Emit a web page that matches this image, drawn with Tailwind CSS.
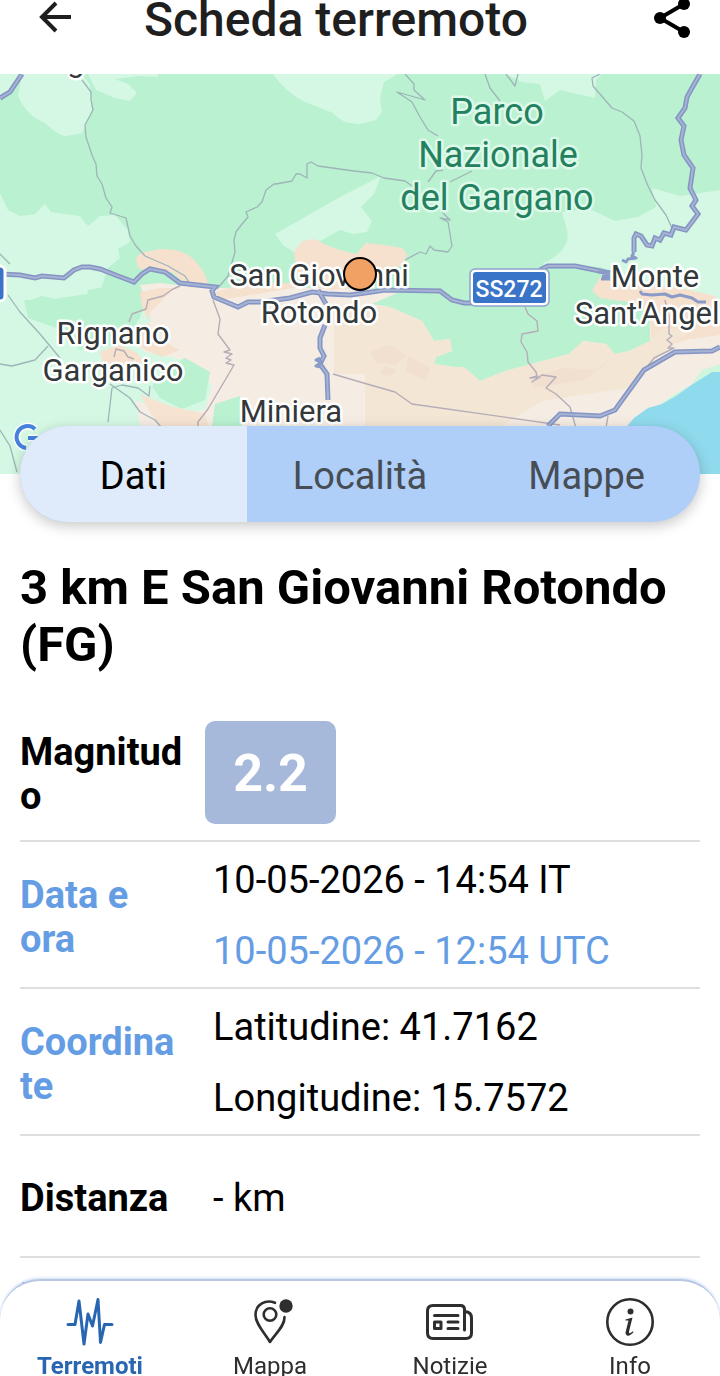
<!DOCTYPE html>
<html lang="it">
<head>
<meta charset="utf-8">
<meta name="viewport" content="width=device-width, initial-scale=1">
<title>Scheda terremoto</title>
<script src="https://cdn.jsdelivr.net/npm/@tailwindcss/browser@4"></script>
</head>
<body class="flex h-screen flex-col overflow-hidden bg-white font-['Roboto',sans-serif] text-black">

<header class="flex h-[74px] shrink-0 items-start bg-white pr-7 pl-8">
  <button type="button" aria-label="Indietro" class="w-[112px]">
    <svg class="size-10" viewBox="0 0 40 40" fill="none" stroke="#1f1f1f" stroke-width="4"><path d="M39 17H10M24 3 10 17l14 14"/></svg>
  </button>
  <h1 class="flex-1 text-[48px] leading-10 font-medium text-[#1f1f1f]">Scheda terremoto</h1>
  <button type="button" aria-label="Condividi">
    <svg class="size-11" viewBox="648 0 44 44"><path d="M684 4 660 18 684 32" fill="none" stroke="#000" stroke-width="4"/><circle cx="684" cy="4" r="6"/><circle cx="660" cy="18" r="6"/><circle cx="684" cy="32" r="6"/></svg>
  </button>
</header>

<main class="mb-[60px] min-h-0 flex-1 overflow-hidden">
  <svg class="block h-100 w-full" viewBox="0 74 720 400" preserveAspectRatio="xMidYMid slice" role="img" aria-label="Mappa dell'epicentro">
    <rect y="74" width="720" height="400" fill="#b9f1d1"/>
    <!-- open land -->
    <g fill="#d4f8e3">
      <path d="M0 74H22L12 92 0 96ZM22 74L18 95Q25 115 45 123 60 137 67 136L82 133 92 110 90 85 82 74ZM88 74L96 90 115 98 130 101 137 93 128 84 115 79 140 76 158 77V74Z"/>
      <path d="M273 74Q285 92 305 102L333 113Q343 125 360 124L376 120 382 112 380 98 384 82 398 74ZM505 74L522 82 540 84 545 101 560 90 595 98 596 80 602 74Z"/>
      <path d="M0 193L8 210 20 216 35 214 45 204 51 212 80 216 88 226 100 216 115 215 128 230 130 242 118 249 120 258 108 268 100 292 60 298 50 300 24 300 28 318 62 330 80 350 115 345 140 318 145 300 200 340 220 370 232 400V474H0Z"/>
      <path d="M275 234L298 221 340 197 381 176 374 194 361 207 372 221 367 232 353 234 340 230 317 243 294 252 284 246Z"/>
      <path d="M562 212L590 209 615 221 638 217 656 207 652 188 680 196 720 190V330L690 330 660 292 601 267 542 264Q572 250 567 230Z"/>
    </g>
    <g fill="#b9f1d1"><path d="M25 302L42 296 68 302 64 326 42 322ZM88 290L110 286 134 304 138 330 98 328 84 310Z"/></g>
    <!-- hills and plain -->
    <path fill="#f5ede4" d="M140 285L160 283 205 288 260 288 330 288 404 290 372 304 390 307 422 321 434 341 450 339 452 351 436 357 434 364 455 367 464 367 480 381 505 371 569 354 583 341 606 344 615 354 629 351 650 341V314L665 304 720 300V474H150L135 400 170 414 205 410 212 385 185 360 145 352 130 340 152 320Z"/>
    <g fill="#f6e0ce">
      <path d="M136 258L141 253 160 249Q178 248 190 256 206 270 208 284L190 288 172 272 155 272 138 268ZM140 292L160 288 175 288 150 312 148 325 160 340 180 350 162 357 145 350 130 338 150 325 142 306ZM100 352L118 345 136 352 145 362 122 368 104 366Z"/>
      <path d="M294 252L302 241 315 239 326 245 340 250 356 254 366 243 385 245 402 248 407 254 404 265 378 272 372 286 330 290 300 284 296 266ZM210 294L240 284 290 283 300 287 252 295 225 299Z"/>
      <path d="M592 291L600 277 622 280 690 290 715 296 720 302V335L685 340 652 352 650 314 634 303 600 298Z"/>
    </g>
    <path fill="#f4e6d5" d="M334 320L365 306 390 307 422 321 434 341 450 339 452 351 436 357 434 364 455 367 464 367 480 381 505 371 569 354 583 341 606 344 615 354 629 351 650 341 660 328 690 330 646 368 634 387 542 401 505 424 500 440H365V374H334Z"/>
    <path fill="#b9f1d1" d="M152 386L162 372 185 358 210 372 205 400 182 409 160 398ZM215 404L240 396 242 426H212Z"/>
    <path fill="#f6e3d2" d="M140 394L170 406 205 414 210 430H160Z"/>
    <g fill="#efdccb" opacity=".6"><path d="M370 352l20-7 16 10-10 10-20-2zM408 356l22 12-4 12-20-8zM530 378l34-10 30 2 20-12-30 22-50 8zM385 366l12 4-6 6-12-2z"/></g>
    <path fill="#cdf6dd" d="M720 364L702 370 692 384 672 396 658 406 664 408 684 398 704 380 720 374Z"/>
    <path fill="#90daed" d="M720 372L712 372 690 386 676 396 662 404 648 408 634 418 622 432 640 474H720Z"/>
    <!-- minor roads -->
    <g fill="none" stroke="#9fb4b9" stroke-width="1.3" stroke-linejoin="round">
      <path d="M82 80L91 92 91 100 93 110 85 125 86 137 92 155 96 164 97 176 102 184 106 198 112 207 110 213 126 218 130 236 136 246 145 256 168 266 185 276 190 284"/>
      <path d="M217 289L228 276 235 252 234 240 236 232 242 224 248 217 246 212 257 207 262 202 266 190 274 184 276 184 292 181 296 174 300 174 307 178V164L311 162 318 166 354 171 372 173 384 178 405 181 415 188"/>
      <path d="M405 74L414 84 414 90 425 100 397 92 412 102 420 117 428 130 438 136M485 74L490 88 500 101M506 74L515 86 518 74"/>
      <path d="M442 212L450 220 440 218 448 222 452 246 448 252 434 250 430 246 426 254 420 252 405 260M428 182L436 171 443 170M450 182L472 171"/>
      <path d="M600 74L592 78 593 86 612 108 622 112 634 121 640 136 642 155 641 168 648 186 655 200 666 215 672 228"/>
      <path d="M0 254L10 264M0 430L10 446 17 472M8 295L20 312 40 334 60 358M108 422L112 388 122 385 138 388 149 396 150 386M110 384L130 398 140 412 155 420 162 428M0 364L12 366 35 360 48 346"/>
    </g>
    <g fill="none" stroke="#b5adb7" stroke-width="1.4" stroke-linejoin="round">
      <path d="M129 322L132 314 146 309 148 300 163 296 173 289 180 286M213 300L220 319 218 334 230 350 224 352 232 354 226 358 231 360 226 363 234 365 208 409 198 422 198 428M114 357l2-8 8 2 4 6 6 2"/>
      <path d="M333 374L360 382 395 392 412 404 560 425M525 307L528 314 537 321 538 331 522 334 521 342 527 352 528 362 536 372 537 376 530 378 540 377 532 382 542 375 556 377 546 388 556 394 570 407 576 428M606 428L608 416"/>
      <path d="M665 300L669 316 669 334 672 336 667 340 672 344 668 348 674 348 654 358 645 370"/>
    </g>
    <!-- main roads: casing, then a lighter core -->
    <g fill="none" stroke-linejoin="round">
      <g id="roads">
        <path d="M0 274L20 275 35 278 42 276 64 278 74 270 82 267 90 267 100 269 118 276 134 282 142 274 150 269 165 272 180 283 215 287 212 291 214 297 238 307 248 302 260 302 290 298 312 292 328 294 350 295 365 293 385 290 440 291 452 300 464 303 472 303M540 270L548 266 575 266 610 273"/>
        <path d="M0 98L10 92 22 74M318 290L326 304M325 325L320 338 320 348 324 356 320 364 327 374 328 400"/>
        <path d="M548 426L560 414 600 416 615 410 644 370 675 352 712 351 720 347"/>
        <path d="M700 74L692 88 687 97 685 108 678 118 684 126 681 140 684 155 693 168 690 188 696 200 692 206 698 214 686 230 674 227 671 235 664 233 660 240 655 238 652 246 647 245 641 236 636 234 634 238 634 252"/>
      </g>
    </g>
    <use href="#roads" fill="none" stroke="#8494c4" stroke-width="5"/>
    <use href="#roads" fill="none" stroke="#a6b3d3" stroke-width="2"/>
    <path d="M634 252L632 256 636 258 628 259 626 262 622 260M640 291L642 294 652 295 665 294 672 297 680 295 692 298 698 302 706 302M598 272h12M602 276h8M601 279h9M320 358l-4 2 6 2-6 4 5 1" fill="none" stroke="#8a9bc7" stroke-width="3" stroke-linejoin="round"/>
    <!-- place names -->
    <g font-family="Roboto, sans-serif" text-anchor="middle" font-size="31" fill="#33383a" stroke="#fff" stroke-width="5" stroke-linejoin="round" paint-order="stroke">
      <g font-size="36" fill="#23815f" stroke="#dcf9e9">
        <text x="497" y="124">Parco</text><text x="498" y="167">Nazionale</text><text x="497" y="210">del Gargano</text>
      </g>
      <text x="76" y="72">g</text>
      <text x="319" y="286">San Giovanni</text><text x="319" y="323">Rotondo</text>
      <text x="113" y="344">Rignano</text><text x="113" y="381">Garganico</text>
      <text x="291" y="422">Miniera</text>
      <text x="655" y="287">Monte</text><text x="656" y="324">Sant'Angelo</text>
    </g>
    <rect x="470" y="269" width="79" height="37" rx="5" fill="#fff" stroke="#8ea2cf" stroke-width="1.5"/>
    <rect x="473" y="272" width="73" height="31" rx="3" fill="#3a74c8"/>
    <text x="509" y="297" font-family="Roboto, sans-serif" font-size="23" font-weight="500" fill="#fff" text-anchor="middle">SS272</text>
    <rect x="-20" y="266" width="25" height="35" rx="5" fill="#3a74c8" stroke="#fff" stroke-width="3"/>
    <g fill="none"><path d="M35 429A11 11 0 1 0 26 448M28 438H38" stroke="#fff" stroke-width="7"/><path d="M35 429A11 11 0 1 0 26 448M28 438H38" stroke="#4681dd" stroke-width="4"/></g>
    <circle cx="360" cy="274" r="16" fill="#f1a163" stroke="#000" stroke-width="2"/>
  </svg>

  <div class="px-5">
    <nav aria-label="Sezioni" class="relative -mt-12 grid h-24 grid-cols-3 overflow-hidden rounded-full bg-[#afcef8] text-[38px] text-[#474d55] shadow-[0_4px_14px_rgba(0,0,0,0.22)]">
      <button type="button" class="bg-[#dfeafb] pt-1 text-black" aria-current="true">Dati</button>
      <button type="button" class="pt-1">Località</button>
      <button type="button" class="pt-1">Mappe</button>
    </nav>

    <h2 class="mt-[37px] text-[49px] leading-[57px] font-bold">3 km E San Giovanni Rotondo (FG)</h2>

    <table class="mt-[31px] w-full table-fixed border-collapse text-left text-[38px]">
      <colgroup><col class="w-[185px]"><col></colgroup>
      <tbody>
        <tr class="h-[137px] border-b-2 border-[#dedede]">
          <th scope="row" class="pt-1 pr-5 leading-[44px] font-bold wrap-break-word">Magnitudo</th>
          <td><span class="inline-flex h-[103px] w-[131px] items-center justify-center rounded-[10px] bg-[#a6b9da] pt-1 align-middle text-[52px] font-bold text-white">2.2</span></td>
        </tr>
        <tr class="h-[146px] border-b-2 border-[#dedede]">
          <th scope="row" class="pt-1 pr-5 leading-[44px] font-bold wrap-break-word text-[#659de4]">Data e ora</th>
          <td class="pt-[3px] pl-2 leading-[71px]"><p>10-05-2026 - 14:54 IT</p><p class="text-[#659de4]">10-05-2026 - 12:54 UTC</p></td>
        </tr>
        <tr class="h-[146px] border-b-2 border-[#dedede]">
          <th scope="row" class="pt-1 pr-5 leading-[44px] font-bold wrap-break-word text-[#659de4]">Coordinate</th>
          <td class="pt-[3px] pl-2 leading-[71px]"><p>Latitudine: 41.7162</p><p>Longitudine: 15.7572</p></td>
        </tr>
        <tr class="h-[122px] border-b-2 border-[#dedede]">
          <th scope="row" class="pt-1 pr-5 leading-[44px] font-bold wrap-break-word">Distanza</th>
          <td class="pt-1 pl-2">- km</td>
        </tr>
        <tr class="h-[122px]">
          <th scope="row" class="pr-5 leading-[44px] font-bold wrap-break-word text-[#659de4]">Profondità</th>
          <td></td>
        </tr>
      </tbody>
    </table>
  </div>
</main>

<nav aria-label="Principale" class="fixed inset-x-0 bottom-0 grid h-[97px] grid-cols-4 rounded-t-[40px] border-t-2 border-[#b9c7e0] bg-white text-2xl leading-6 text-[#2e2e2e] shadow-[0_-1px_3px_rgba(150,185,235,0.5)]">
  <a href="#terremoti" class="flex flex-col items-center gap-2 pt-[17px] font-bold text-[#2866b2]" aria-current="page">
    <svg class="size-12 shrink-0" viewBox="66 1298 48 48" fill="none" stroke="currentColor" stroke-width="3" stroke-linecap="round" stroke-linejoin="round"><path d="M68 1324.500H75L79 1301 84 1344 88 1314 92.500 1326 98 1299.500 100.500 1342.500 104.500 1324.500H112"/></svg>
    Terremoti
  </a>
  <a href="#mappa" class="flex flex-col items-center gap-2 pt-[17px]">
    <svg class="size-12 shrink-0" viewBox="246 1298 48 48" fill="none" stroke="currentColor" stroke-width="2.600" stroke-linecap="round" stroke-linejoin="round"><path d="M275 1302.800C266 1299 255.500 1304 255.500 1315 255.500 1324 264 1332 270 1342 275 1334 285 1326 284.500 1317"/><circle cx="270" cy="1314.500" r="6.300"/><circle cx="286" cy="1306" r="6.700" fill="currentColor" stroke="none"/></svg>
    Mappa
  </a>
  <a href="#notizie" class="flex flex-col items-center gap-2 pt-[17px]">
    <svg class="size-12 shrink-0" viewBox="426 1298 48 48" fill="none" stroke="currentColor" stroke-width="3" stroke-linecap="round" stroke-linejoin="round"><path d="M464.500 1330V1309.500Q464.500 1305.500 460.500 1305.500H433Q427.500 1305.500 427.500 1311V1333Q427.500 1338.500 433 1338.500H466Q471.500 1338.500 471.500 1333V1318Q471.500 1312 465 1311.500M434.500 1315.500H458M448 1322H458M448 1328.500H458"/><path d="M434.500 1322H441V1328.500H434.500Z"/></svg>
    Notizie
  </a>
  <a href="#info" class="flex flex-col items-center gap-2 pt-[17px]">
    <svg class="size-12 shrink-0" viewBox="606 1298 48 48" fill="none" stroke="currentColor" stroke-width="2.600"><circle cx="630" cy="1322" r="22.700"/><circle cx="630.500" cy="1311.500" r="3" fill="currentColor" stroke="none"/><path d="M625.500 1319.500 632.500 1317.500 629 1331.500Q628.600 1333.800 630.500 1333L633 1331.300 633.500 1332.300Q629.500 1336.500 627 1335.500 625 1334.800 625.600 1332L628.500 1320.500H625.500Z" fill="currentColor" stroke="none"/></svg>
    Info
  </a>
</nav>
</body>
</html>
